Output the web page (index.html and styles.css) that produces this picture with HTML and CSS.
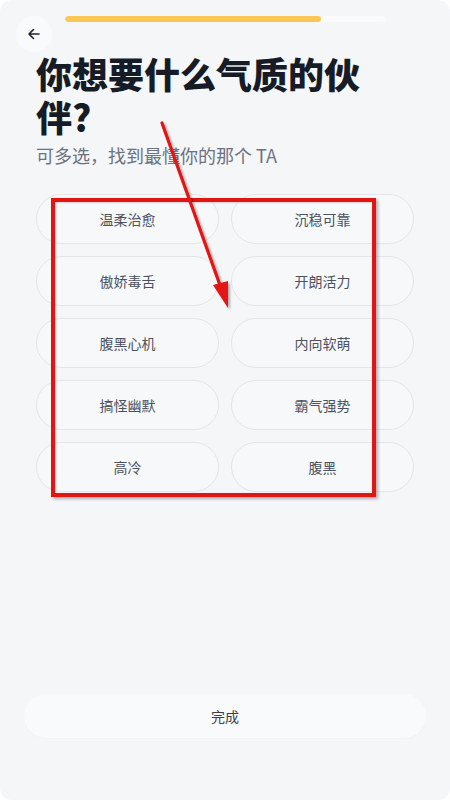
FILE: index.html
```html
<!DOCTYPE html>
<html lang="zh">
<head>
<meta charset="utf-8">
<link rel="stylesheet" href="styles.css">
</head>
<body>
<div class="screen">
  <div class="header">
    <div class="back">
      <svg width="16" height="16" viewBox="0 0 16 16" fill="none" stroke="#1f2430" stroke-width="1.6" stroke-linecap="round" stroke-linejoin="round"><path d="M13 8H3M7.5 3.5L3 8l4.5 4.5"/></svg>
    </div>
    <div class="progress"><div class="fill" style="width:80%"></div></div>
  </div>
  <h1 class="title">你想要什么气质的伙伴?</h1>
  <p class="subtitle">可多选，找到最懂你的那个 TA</p>
  <div class="chips">
    <div class="chip">温柔治愈</div>
    <div class="chip">沉稳可靠</div>
    <div class="chip">傲娇毒舌</div>
    <div class="chip">开朗活力</div>
    <div class="chip">腹黑心机</div>
    <div class="chip">内向软萌</div>
    <div class="chip">搞怪幽默</div>
    <div class="chip">霸气强势</div>
    <div class="chip">高冷</div>
    <div class="chip">腹黑</div>
  </div>
  <div class="done">完成</div>
  <div class="mark-box"></div>
  <svg class="mark-arrow" width="450" height="800" viewBox="0 0 450 800">
    <g filter="url(#sh)">
      <line x1="162" y1="123" x2="221" y2="288" stroke="#e31414" stroke-width="3.2" stroke-linecap="round"/>
      <polygon points="213,285 228,281 228,308" fill="#e31414"/>
    </g>
    <defs>
      <filter id="sh" x="-20%" y="-20%" width="140%" height="140%">
        <feDropShadow dx="2" dy="2" stdDeviation="1.2" flood-color="#000" flood-opacity="0.3"/>
      </filter>
    </defs>
  </svg>
</div>
</body>
</html>
```
FILE: styles.css
```css
html, body {
  margin: 0;
  padding: 0;
  background: #ffffff;
}
body {
  font-family: "Noto Sans CJK SC", "Noto Sans", sans-serif;
}
.screen {
  position: relative;
  width: 450px;
  height: 800px;
  box-sizing: border-box;
  background: #f5f6f8;
  border-radius: 12px;
  overflow: hidden;
  display: flex;
  flex-direction: column;
  padding: 16px 0 62px;
}
.header {
  display: grid;
  grid-template-columns: 65px 320px 65px;
  align-items: start;
}
.back {
  margin-left: 16px;
  width: 36px;
  height: 36px;
  border-radius: 50%;
  background: #f9fafb;
  display: flex;
  align-items: center;
  justify-content: center;
}
.progress {
  height: 6px;
  border-radius: 3px;
  background: #fbfbfc;
  overflow: hidden;
}
.fill {
  height: 100%;
  border-radius: 3px;
  background: #fcc657;
}
.title {
  margin: 0 36px;
  font-size: 36px;
  line-height: 43px;
  font-weight: 900;
  color: #161b26;
}
.subtitle {
  margin: 4px 36px 0;
  font-size: 18px;
  line-height: 26px;
  color: #6b7280;
}
.chips {
  margin: 26px 36px 0;
  display: grid;
  grid-template-columns: 1fr 1fr;
  gap: 12px;
}
.chip {
  height: 50px;
  box-sizing: border-box;
  border: 1px solid #e3e5e9;
  border-radius: 25px;
  background: #f7f8fa;
  display: flex;
  align-items: center;
  justify-content: center;
  font-size: 14px;
  color: #4b5260;
}
.done {
  margin: auto 24px 0;
  height: 44px;
  border-radius: 22px;
  background: #f9fafb;
  box-shadow: 0 1px 2px rgba(0,0,0,0.02);
  display: flex;
  align-items: center;
  justify-content: center;
  font-size: 14px;
  color: #3a3f4a;
}
.mark-box {
  position: absolute;
  left: 51px;
  top: 198px;
  width: 325px;
  height: 299px;
  box-sizing: border-box;
  border: 4px solid #e31414;
  box-shadow: 2px 2px 3px rgba(0,0,0,0.3), inset 1px 1px 2px rgba(0,0,0,0.15);
}
.mark-arrow {
  position: absolute;
  left: 0;
  top: 0;
  pointer-events: none;
}
```
